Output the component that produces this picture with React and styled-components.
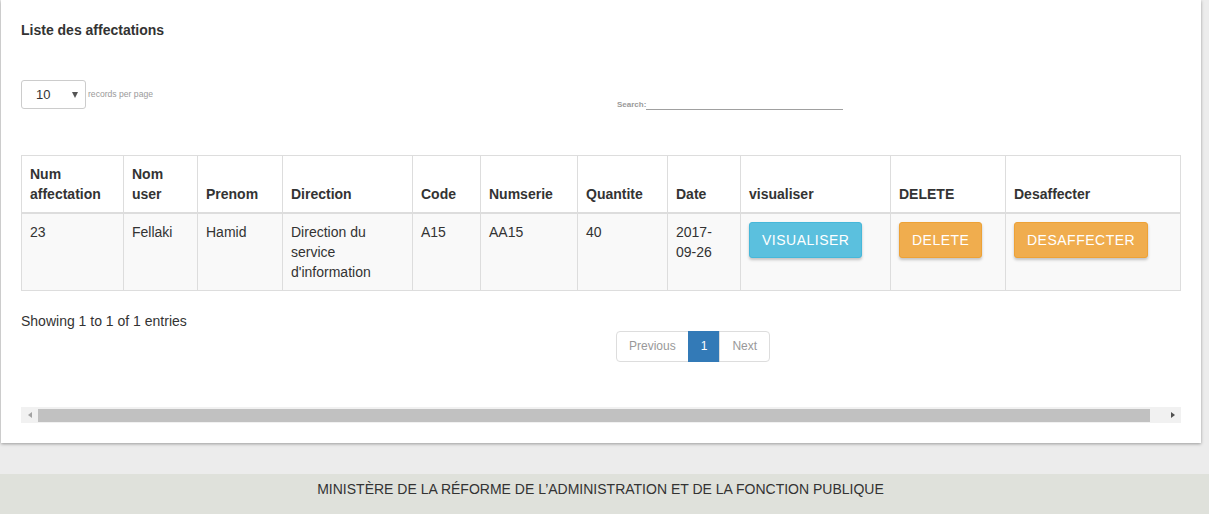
import React from 'react';
import styled, { createGlobalStyle } from 'styled-components';

const GlobalStyle = createGlobalStyle`
  html, body {
    margin: 0;
    padding: 0;
    background: #ececec;
    font-family: "Liberation Sans", Arial, sans-serif;
    color: #333;
    overflow: hidden;
  }
`;

const columns = [
  { label: 'Num affectation', width: 102 },
  { label: 'Nom user', width: 74 },
  { label: 'Prenom', width: 85 },
  { label: 'Direction', width: 130 },
  { label: 'Code', width: 68 },
  { label: 'Numserie', width: 97 },
  { label: 'Quantite', width: 90 },
  { label: 'Date', width: 73 },
  { label: 'visualiser', width: 150 },
  { label: 'DELETE', width: 115 },
  { label: 'Desaffecter', width: 175 },
];

const Page = styled.div`
  display: flex;
  flex-direction: column;
`;

const Card = styled.div`
  margin: 0 8px 31px 1px;
  padding: 20px;
  background: #fff;
  box-shadow: 0 1px 3px rgba(0, 0, 0, 0.35);
`;

const Title = styled.h4`
  margin: 0;
  font-size: 14px;
  line-height: 20px;
  font-weight: bold;
  color: #333;
`;

const Toolbar = styled.div`
  display: grid;
  grid-template-columns: 596px 1fr;
  align-items: end;
  margin-top: 40px;
  height: 30px;
`;

const Length = styled.div`
  display: flex;
  align-items: center;
  align-self: start;
  gap: 2px;
`;

const SelectBox = styled.div`
  box-sizing: border-box;
  width: 65px;
  height: 29px;
  border: 1px solid #ccc;
  border-radius: 3px;
  display: flex;
  align-items: center;
  justify-content: space-between;
  padding: 0 7px 0 14px;
  font-size: 13px;
  color: #333;
`;

const Caret = styled.span`
  width: 0;
  height: 0;
  border-left: 3px solid transparent;
  border-right: 3px solid transparent;
  border-top: 6px solid #555;
`;

const Tiny = styled.span`
  font-size: 8.6px;
  color: #9a9a9a;
  margin-top: -2px;
`;

const Search = styled.label`
  display: flex;
  align-items: flex-end;
  font-size: 8px;
  color: #9a9a9a;
  font-weight: bold;
  padding-bottom: 1px;
`;

const SearchLine = styled.span`
  display: block;
  width: 197px;
  height: 10px;
  border-bottom: 1px solid #a0a0a0;
  margin-bottom: -1px;
`;

const Table = styled.table`
  margin-top: 45px;
  width: 1159px;
  table-layout: fixed;
  border-collapse: collapse;
  font-size: 14px;
  line-height: 20px;
`;

const Th = styled.th`
  border: 1px solid #ddd;
  border-bottom: 2px solid #ddd;
  padding: 8px;
  text-align: left;
  vertical-align: bottom;
  font-weight: bold;
`;

const Td = styled.td`
  border: 1px solid #ddd;
  padding: 8px;
  vertical-align: top;
  background: #f9f9f9;
`;

const Button = styled.button`
  display: inline-block;
  box-sizing: border-box;
  height: 36px;
  padding: 0 12px;
  border: 1px solid ${p => (p.$info ? '#46b8da' : '#eea236')};
  background: ${p => (p.$info ? '#5bc0de' : '#f0ad4e')};
  color: #fff;
  font-family: "Liberation Sans", Arial, sans-serif;
  font-size: 14px;
  letter-spacing: 0.5px;
  border-radius: 3px;
  box-shadow: 0 2px 3px rgba(0, 0, 0, 0.22);
  cursor: pointer;
`;

const Bottom = styled.div`
  display: grid;
  grid-template-columns: 595px 1fr;
  margin-top: 20px;
`;

const Info = styled.div`
  font-size: 14px;
  line-height: 20px;
  grid-column: 1 / -1;
`;

const Pager = styled.ul`
  grid-column: 2;
  display: flex;
  list-style: none;
  margin: 0;
  padding: 0;
`;

const PageItem = styled.li`
  box-sizing: border-box;
  height: 31px;
  padding: 6px 12px;
  font-size: 12px;
  line-height: 17px;
  border: 1px solid ${p => (p.$active ? '#337ab7' : '#ddd')};
  margin-left: -1px;
  background: ${p => (p.$active ? '#337ab7' : '#fff')};
  color: ${p => (p.$active ? '#fff' : '#999')};
  &:first-child {
    border-radius: 4px 0 0 4px;
    margin-left: 0;
  }
  &:last-child {
    border-radius: 0 4px 4px 0;
  }
`;

const Scroll = styled.div`
  margin-top: 45px;
  height: 16px;
  background: #f1f1f1;
  display: flex;
  align-items: center;
`;

const Arrow = styled.span`
  width: 17px;
  display: flex;
  justify-content: center;
  &::before {
    content: '';
    width: 0;
    height: 0;
    border-top: 3.5px solid transparent;
    border-bottom: 3.5px solid transparent;
    ${p => (p.$right
      ? 'border-left: 4px solid #505050;'
      : 'border-right: 4px solid #a3a3a3;')}
  }
`;

const Thumb = styled.div`
  flex: 1;
  height: 13px;
  background: #c1c1c1;
  margin-right: 14px;
`;

const Footer = styled.footer`
  height: 60px;
  box-sizing: border-box;
  padding: 7px 8px 0 0;
  background: #dfe1db;
  display: flex;
  justify-content: center;
  font-size: 14px;
  line-height: 17px;
  color: #333;
`;

const App = () => {
  return (
    <Page>
      <GlobalStyle />
      <Card>
        <Title>Liste des affectations</Title>
        <Toolbar>
          <Length>
            <SelectBox>10 <Caret /></SelectBox>
            <Tiny>records per page</Tiny>
          </Length>
          <Search>Search:<SearchLine /></Search>
        </Toolbar>
        <Table>
          <colgroup>
            {columns.map(c => <col key={c.label} style={{ width: c.width }} />)}
          </colgroup>
          <thead>
            <tr>
              {columns.map(c => <Th key={c.label}>{c.label}</Th>)}
            </tr>
          </thead>
          <tbody>
            <tr>
              <Td>23</Td>
              <Td>Fellaki</Td>
              <Td>Hamid</Td>
              <Td>Direction du service d'information</Td>
              <Td>A15</Td>
              <Td>AA15</Td>
              <Td>40</Td>
              <Td>2017-09-26</Td>
              <Td><Button $info>VISUALISER</Button></Td>
              <Td><Button>DELETE</Button></Td>
              <Td><Button>DESAFFECTER</Button></Td>
            </tr>
          </tbody>
        </Table>
        <Bottom>
          <Info>Showing 1 to 1 of 1 entries</Info>
          <Pager>
            <PageItem>Previous</PageItem>
            <PageItem $active>1</PageItem>
            <PageItem>Next</PageItem>
          </Pager>
        </Bottom>
        <Scroll>
          <Arrow />
          <Thumb />
          <Arrow $right />
        </Scroll>
      </Card>
      <Footer>MINISTÈRE DE LA RÉFORME DE L’ADMINISTRATION ET DE LA FONCTION PUBLIQUE</Footer>
    </Page>
  );
};

export default App;
